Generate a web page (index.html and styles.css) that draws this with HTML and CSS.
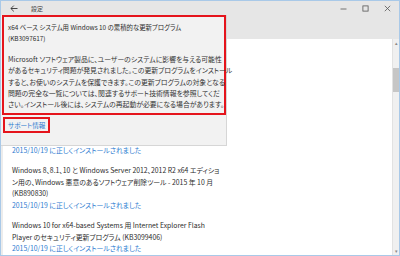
FILE: index.html
```html
<!DOCTYPE html>
<html lang="ja">
<head>
    <meta charset="UTF-8">
    <title>設定</title>
    <link rel="stylesheet" href="styles.css">
</head>
<body>
    <div class="window">
        <!-- Barre de titre -->
        <header class="titlebar">
            <span class="back">
                <svg width="8" height="7" viewBox="0 0 8 7"><path d="M7.5 3.5H1M3.8 0.6L0.9 3.5l2.9 2.9" fill="none" stroke="#333" stroke-width="0.9"/></svg>
            </span>
            <span class="app-title">設定</span>
            <div class="controls">
                <svg width="7" height="7" viewBox="0 0 7 7"><path d="M0.5 4h6" stroke="#555" stroke-width="0.8"/></svg>
                <svg width="7" height="7" viewBox="0 0 7 7"><rect x="0.9" y="0.9" width="5.2" height="5.2" fill="none" stroke="#555" stroke-width="0.8"/></svg>
                <svg width="7" height="7" viewBox="0 0 7 7"><path d="M0.8 0.8l5.4 5.4M6.2 0.8L0.8 6.2" stroke="#555" stroke-width="0.8"/></svg>
            </div>
        </header>
        <div class="page-header"></div>

        <main class="content">
            <div class="updates">
                <p class="status">2015/10/19 に正しくインストールされました</p>

                <div class="update">
                    <p class="update-name">Windows 8、8.1、10 と Windows Server 2012、2012 R2 x64 エディショ<br>ン用の、Windows 悪意のあるソフトウェア削除ツール - 2015 年 10 月<br>(KB890830)</p>
                    <p class="status">2015/10/19 に正しくインストールされました</p>
                </div>

                <div class="update">
                    <p class="update-name">Windows 10 for x64-based Systems 用 Internet Explorer Flash<br>Player のセキュリティ更新プログラム (KB3099406)</p>
                    <p class="status">2015/10/19 に正しくインストールされました</p>
                </div>
            </div>

            <div class="scrollbar">
                <span class="arrow">&#9652;</span>
                <div class="track"><div class="thumb"></div></div>
                <span class="arrow">&#9662;</span>
            </div>
        </main>

        <!-- Détail de la mise à jour (superposé) -->
        <section class="detail">
            <div class="detail-box">
                <h2 class="detail-title">x64 ベース システム用 Windows 10 の累積的な更新プログラム<br>(KB3097617)</h2>
                <p class="detail-text">Microsoft ソフトウェア製品に、ユーザーのシステムに影響を与える可能性<br>があるセキュリティ問題が発見されました。この更新プログラムをインストール<br>すると、お使いのシステムを保護できます。この更新プログラムの対象となる<br>問題の完全な一覧については、関連するサポート技術情報を参照してくだ<br>さい。インストール後には、システムの再起動が必要になる場合があります。</p>
            </div>
            <a href="#" class="support-link">サポート情報</a>
        </section>
    </div>
</body>
</html>
```

FILE: styles.css
```css
/* Reset et variables */
:root {
    --color-bar: #e6e6e6;
    --color-panel: #f2f2f2;
    --color-text: #2b2b2b;
    --color-link: #2a7ad0;
    --color-mark: #e5141c;
}

* {
    margin: 0;
    padding: 0;
    box-sizing: border-box;
}

body {
    font-family: 'Noto Sans CJK JP', sans-serif;
    font-feature-settings: "palt";
    color: var(--color-text);
    background: #fff;
}

.window {
    width: 400px;
    height: 256px;
    border: 1px solid #a9c9e8;
    position: relative;
    overflow: hidden;
    display: flex;
    flex-direction: column;
}

/* Barre de titre */
.titlebar {
    height: 15px;
    background: var(--color-bar);
    display: flex;
    align-items: center;
    padding-left: 9px;
}

.back {
    display: flex;
    width: 21px;
}

.app-title {
    font-size: 6px;
    color: #444;
}

.controls {
    margin-left: auto;
    display: flex;
    gap: 15px;
    padding-right: 8px;
}

.page-header {
    height: 23px;
    background: var(--color-bar);
}

/* Liste des mises à jour */
.content {
    flex: 1;
    display: flex;
    border-left: 2px solid #ececec;
}

.updates {
    flex: 1;
    padding: 106px 0 0 9px;
    font-size: 6.85px;
    line-height: 11.6px;
    white-space: nowrap;
}

.update {
    margin-top: 8.5px;
}

.status {
    color: var(--color-link);
}

.scrollbar {
    width: 7px;
    background: #f0f0f0;
    border-left: 1px solid #e2e2e2;
    display: flex;
    flex-direction: column;
    align-items: center;
}

.arrow {
    font-size: 5px;
    line-height: 8px;
    color: #888;
}

.track {
    flex: 1;
    width: 100%;
    padding-top: 21px;
}

.thumb {
    height: 24px;
    background: #c6c6c6;
}

/* Panneau de détail */
.detail {
    position: absolute;
    top: 14px;
    left: 0;
    width: 226px;
    height: 131px;
    background: var(--color-panel);
    border-right: 1px solid #d6d6d6;
    border-bottom: 1px solid #d6d6d6;
    padding: 0 0 0 1px;
    white-space: nowrap;
}

.detail-box {
    border: 2px solid var(--color-mark);
    padding: 5px 3px 2px 4px;
}

.detail-title {
    font-size: 6.4px;
    font-weight: 400;
    line-height: 11.4px;
    margin-bottom: 9px;
}

.detail-text {
    font-size: 6.85px;
    line-height: 11.4px;
    color: #333;
}

.support-link {
    display: block;
    width: fit-content;
    margin: 2px 0 0 1px;
    border: 2px solid var(--color-mark);
    padding: 1px 3px;
    font-size: 6.6px;
    line-height: 10px;
    color: var(--color-link);
    text-decoration: none;
}
```
